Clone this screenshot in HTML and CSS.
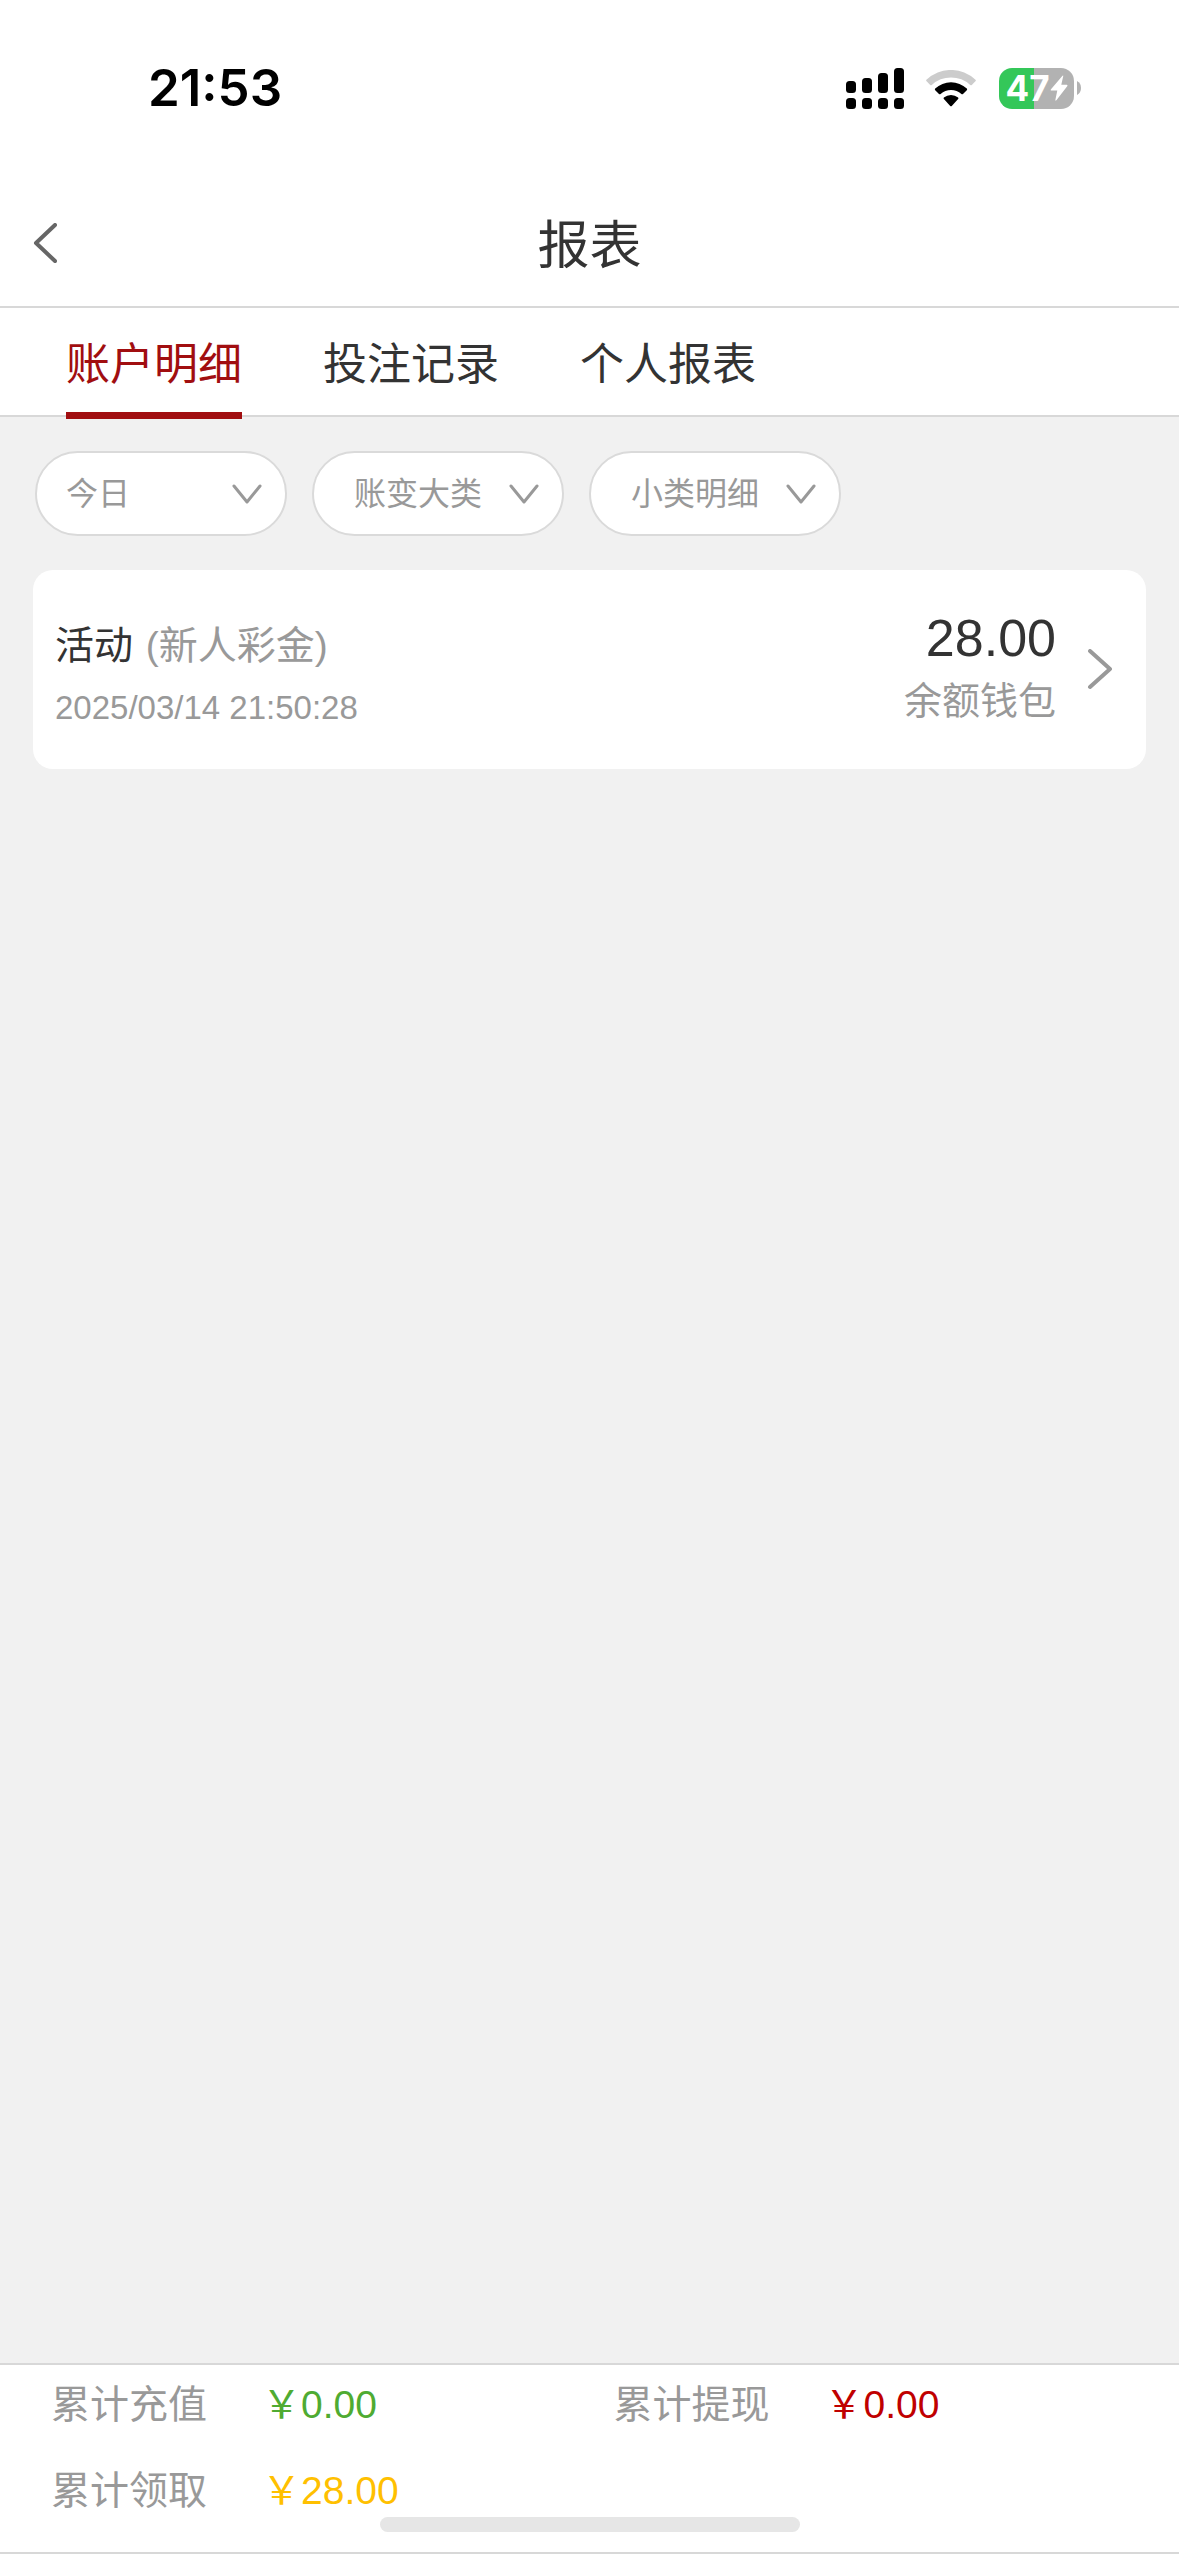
FILE: index.html
```html
<!DOCTYPE html>
<html lang="zh-CN">
<head>
<meta charset="utf-8">
<meta name="viewport" content="width=device-width, initial-scale=1">
<title>报表</title>
<link rel="stylesheet" href="styles.css">
</head>
<body>
<div class="status">
  <span class="status-time">21:53</span>
  <div class="status-icons">
    <svg class="signal" width="58" height="41" viewBox="0 0 58 41" aria-hidden="true">
      <rect x="0" y="13" width="10" height="12" rx="3.5"/>
      <rect x="16" y="10" width="10" height="15" rx="3.5"/>
      <rect x="32" y="5" width="10" height="20" rx="3.5"/>
      <rect x="48" y="0" width="10" height="25" rx="3.5"/>
      <rect x="0" y="30" width="10" height="11" rx="3.5"/>
      <rect x="16" y="30" width="10" height="11" rx="3.5"/>
      <rect x="32" y="30" width="10" height="11" rx="3.5"/>
      <rect x="48" y="30" width="10" height="11" rx="3.5"/>
    </svg>
    <svg class="wifi" width="50" height="37" viewBox="0 0 50 37" aria-hidden="true">
      <path fill="#ccc" d="M.4 9.8Q-.2 10.600.6 11.300L4.200 15Q5 15.700 5.800 15A28 28 0 0 1 44.200 15Q45 15.700 45.800 15L49.400 11.300Q50.200 10.600 49.500 9.800A35.500 35.500 0 0 0 .4 9.800Z"/>
      <path d="M9.200 18.600Q8.400 19.400 9.200 20.200L13 24Q13.800 24.700 14.600 24A15.500 15.500 0 0 1 35.400 24Q36.200 24.700 37 24L40.800 20.200Q41.600 19.400 40.800 18.600A23 23 0 0 0 9.200 18.600Z"/>
      <path d="M17.900 27.500Q17.100 28.300 17.900 29.100L24.200 35.900Q25 36.700 25.800 35.900L32.100 29.100Q32.900 28.300 32.100 27.500A11 11 0 0 0 17.900 27.500Z"/>
    </svg>
    <div class="battery">
      <div class="battery-body">
        <span>47</span>
        <svg width="18" height="26" viewBox="0 0 18 26" aria-hidden="true"><path fill="#fff" d="M12.500.8Q13.400-.2 13.200 1.200L11.300 9.800H16.600Q18 10 17.200 11.300L6.400 25.200Q5.200 26.300 5.400 24.800L7.300 15.600H1.500Q.2 15.400 1 14.200Z"/></svg>
      </div>
      <svg width="4" height="14" viewBox="0 0 4 14" aria-hidden="true"><path fill="#b2b2b2" d="M0 0Q4 2 4 7T0 14Z"/></svg>
    </div>
  </div>
</div>

<header class="navbar">
  <button class="back" type="button" aria-label="返回">
    <svg width="24" height="40" viewBox="0 0 24 40" aria-hidden="true"><path d="M22 2 3 20 22 38"/></svg>
  </button>
  <h1 class="title">报表</h1>
</header>

<nav class="tabs">
  <a class="tab tab-active" href="#account">账户明细</a>
  <a class="tab" href="#bets">投注记录</a>
  <a class="tab" href="#personal">个人报表</a>
</nav>

<main class="content">
  <form class="filters">
    <div class="filter filter-date">
      <select aria-label="日期"><option>今日</option></select>
      <svg width="30" height="20" viewBox="0 0 30 20" aria-hidden="true"><path d="M2 2 15 18 28 2"/></svg>
    </div>
    <div class="filter">
      <select aria-label="账变大类"><option>账变大类</option></select>
      <svg width="30" height="20" viewBox="0 0 30 20" aria-hidden="true"><path d="M2 2 15 18 28 2"/></svg>
    </div>
    <div class="filter">
      <select aria-label="小类明细"><option>小类明细</option></select>
      <svg width="30" height="20" viewBox="0 0 30 20" aria-hidden="true"><path d="M2 2 15 18 28 2"/></svg>
    </div>
  </form>

  <a class="record" href="#record">
    <div class="record-info">
      <div class="record-kind">活动 <span class="record-note">(新人彩金)</span></div>
      <time class="record-time" datetime="2025-03-14T21:50:28">2025/03/14 21:50:28</time>
    </div>
    <div class="record-sum">
      <div class="record-amount">28.00</div>
      <div class="record-wallet">余额钱包</div>
    </div>
    <svg class="record-arrow" width="26" height="42" viewBox="0 0 26 42" aria-hidden="true"><path d="M3 2 23 20 3 38"/></svg>
  </a>
</main>

<footer class="totals">
  <dl class="totals-list">
    <div class="total"><dt>累计充值</dt><dd class="total-in">&#65509;0.00</dd></div>
    <div class="total"><dt>累计提现</dt><dd class="total-out">&#65509;0.00</dd></div>
    <div class="total"><dt>累计领取</dt><dd class="total-bonus">&#65509;28.00</dd></div>
  </dl>
  <div class="home-indicator"></div>
</footer>
</body>
</html>
```
FILE: styles.css
```css
* {
  box-sizing: border-box;
}

body {
  margin: 0;
  min-height: 100vh;
  display: flex;
  flex-direction: column;
  background: #fff;
  color: #333;
  font-family: "Liberation Sans", "Noto Sans CJK SC", sans-serif;
}

/* Status bar */
.status {
  display: flex;
  justify-content: space-between;
  align-items: center;
  height: 176px;
  padding: 0 98px 0 148px;
  color: #000;
}

.status-time {
  font: 600 51px/60px Inter, sans-serif;
}

.status-icons {
  display: flex;
  align-items: center;
}

.wifi {
  margin: 0 23px 0 22px;
}

.battery {
  display: flex;
  align-items: center;
  gap: 3px;
}

.battery-body {
  display: flex;
  align-items: center;
  justify-content: center;
  width: 75px;
  height: 41px;
  border-radius: 13px;
  background: linear-gradient(to right, #34c759 35px, #b2b2b2 35px);
  color: #fff;
  font: 700 35px/41px Inter, sans-serif;
}

/* Title bar */
.navbar {
  display: grid;
  grid-template-columns: 92px 1fr 92px;
  align-items: center;
  height: 132px;
  padding-top: 4px;
  border-bottom: 2px solid #d8d8d8;
}

.back {
  display: flex;
  padding: 20px 33px;
  border: 0;
  background: none;
}

.back svg,
.filter svg,
.record-arrow {
  fill: none;
  stroke: #999;
  stroke-width: 3;
  stroke-linecap: round;
  stroke-linejoin: round;
}

.back svg {
  stroke: #666;
  stroke-width: 4;
}

.title {
  margin: 0;
  padding-top: 6px;
  font-size: 52px;
  font-weight: 400;
  line-height: 60px;
  text-align: center;
}

/* Tabs */
.tabs {
  position: relative;
  display: flex;
  gap: 81px;
  height: 109px;
  padding: 0 66px;
  border-bottom: 2px solid #d8d8d8;
}

.tab {
  height: 111px;
  border-bottom: 7px solid transparent;
  color: #333;
  font-size: 44px;
  line-height: 114px;
  text-decoration: none;
}

.tab-active {
  border-color: #a10e10;
  color: #a10e10;
}

/* Filters and records */
.content {
  flex: 1;
  padding: 34px 33px;
  background: #f1f1f1;
}

.filters {
  display: flex;
  gap: 25px;
  padding: 0 2px;
}

.filter {
  display: grid;
  align-items: center;
  width: 252px;
}

.filter select,
.filter svg {
  grid-area: 1 / 1;
}

.filter select {
  appearance: none;
  width: 100%;
  height: 85px;
  padding: 0 60px 0 40px;
  border: 2px solid #dadada;
  border-radius: 43px;
  background: #fff;
  color: #999;
  font: inherit;
  font-size: 32px;
}

.filter-date select {
  padding-left: 29px;
}

.filter svg {
  justify-self: end;
  margin-right: 25px;
  pointer-events: none;
}

.record {
  display: flex;
  align-items: center;
  height: 199px;
  margin-top: 34px;
  padding: 0 33px 0 22px;
  border-radius: 20px;
  background: #fff;
  color: #333;
  text-decoration: none;
}

.record-info {
  flex: 1;
  padding-top: 16px;
}

.record-kind {
  font-size: 39px;
  line-height: 60px;
}

.record-note {
  margin-left: 2px;
}

.record-note,
.record-time,
.record-wallet {
  color: #999;
}

.record-time {
  display: block;
  font-size: 33px;
  line-height: 64px;
}

.record-sum {
  text-align: right;
}

.record-amount {
  font-size: 52px;
  line-height: 62px;
}

.record-wallet {
  font-size: 38px;
  line-height: 64px;
}

.record-arrow {
  margin-left: 31px;
  stroke-width: 4;
}

/* Totals */
.totals {
  position: relative;
  padding-bottom: 2px;
  border-top: 2px solid #d8d8d8;
}

.totals-list {
  display: grid;
  grid-template-columns: 1fr 1fr;
  row-gap: 6px;
  margin: 0;
  padding: 0 3px 21px 51px;
  border-bottom: 2px solid #d8d8d8;
}

.total {
  display: flex;
  font-size: 39px;
  line-height: 80px;
}

.total dt {
  width: 211px;
  color: #999;
}

.total dd {
  margin: 0;
}

.total-in {
  color: #4fab32;
}

.total-out {
  color: #c00000;
}

.total-bonus {
  color: #ffc000;
}

.home-indicator {
  position: absolute;
  bottom: 24px;
  left: 50%;
  width: 420px;
  height: 15px;
  border-radius: 8px;
  background: #e6e6e6;
  transform: translateX(-50%);
}
```
